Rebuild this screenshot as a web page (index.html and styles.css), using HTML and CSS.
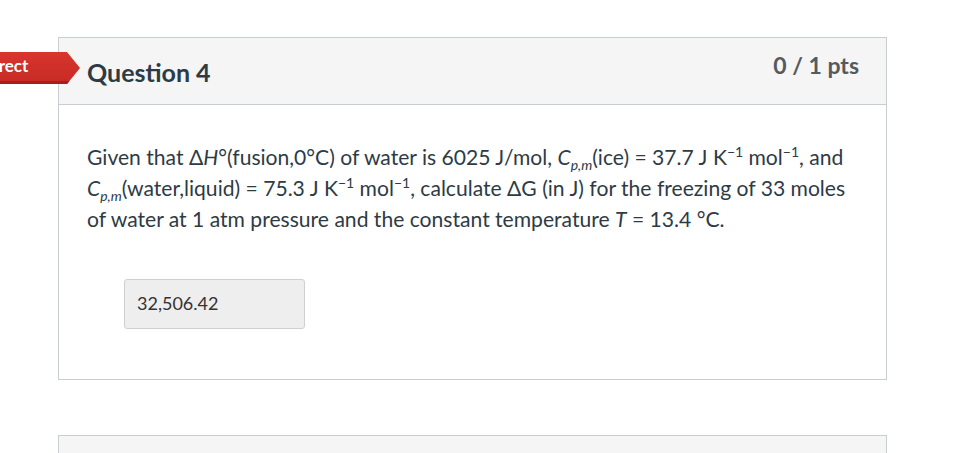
FILE: index.html
```html
<!DOCTYPE html>
<html>
<head>
<meta charset="utf-8">
<link rel="stylesheet" href="styles.css">
</head>
<body>
<div class="page">
  <div class="card">
    <div class="badge"><span>Incorrect</span></div>
    <div class="card-header">
      <h2 class="q-title">Question 4</h2>
      <div class="q-pts">0 / 1 pts</div>
    </div>
    <div class="card-body">
      <p class="q-text">Given that Δ<i>H</i>°(fusion,0°C) of water is 6025 J/mol, <i>C<sub>p,m</sub></i>(ice) = 37.7 J K<sup>−1</sup> mol<sup>−1</sup>, and <i>C<sub>p,m</sub></i>(water,liquid) = 75.3 J K<sup>−1</sup> mol<sup>−1</sup>, calculate ΔG (in J) for the freezing of 33 moles of water at 1 atm pressure and the constant temperature <i>T</i> = 13.4 °C.</p>
      <div class="answer">32,506.42</div>
    </div>
  </div>
  <div class="card card-next">
    <div class="card-header"></div>
  </div>
</div>
</body>
</html>
```
FILE: styles.css
```css
html, body {
  margin: 0;
  padding: 0;
  background: #fff;
  font-family: Lato, "Liberation Sans", sans-serif;
  color: #2d3b45;
  overflow: hidden;
}
.page {
  padding: 37px 80px 0 58px;
  width: 829px;
}
.card {
  position: relative;
  border: 1px solid #c7cdd1;
  background: #fff;
}
.card-header {
  height: 66px;
  background: #f5f5f5;
  border-bottom: 1px solid #c7cdd1;
  display: flex;
  justify-content: space-between;
  align-items: flex-start;
  padding: 0 27px 0 28px;
}
.q-title {
  margin: 19px 0 0;
  font-size: 25px;
  font-weight: 700;
  color: #2d3b45;
  line-height: 30px;
}
.q-pts {
  margin-top: 13px;
  font-size: 23px;
  font-weight: 700;
  color: #555a5e;
  line-height: 28px;
}
.card-body {
  padding: 36px 28px 50px 28px;
}
.q-text {
  margin: 0;
  font-size: 21.1px;
  line-height: 31px;
  color: #2d3b45;
}
.q-text sub, .q-text sup {
  font-size: 14px;
  line-height: 0;
}
.answer {
  margin: 45px 0 0 37px;
  width: 167px;
  height: 48px;
  box-sizing: content-box;
  padding: 0 0 0 12px;
  background: #eeeeee;
  border: 1px solid #cfcfcf;
  border-radius: 3px;
  font-size: 18px;
  line-height: 46px;
  color: #333;
}
.card-next {
  margin-top: 55px;
  height: 30px;
}
.badge {
  position: absolute;
  top: 14px;
  left: -138px;
  width: 159px;
  height: 32px;
  background: linear-gradient(#d9352f, #c62a24);
  box-shadow: inset 0 -3px 0 #a81e1a;
  clip-path: polygon(0 0, 146px 0, 159px 16px, 146px 32px, 0 32px);
  color: #fff;
  font-weight: 700;
  font-size: 17px;
  line-height: 28px;
  text-align: left;
  z-index: 2;
}
.badge span {
  display: block;
  padding-left: 39px;
}
```
